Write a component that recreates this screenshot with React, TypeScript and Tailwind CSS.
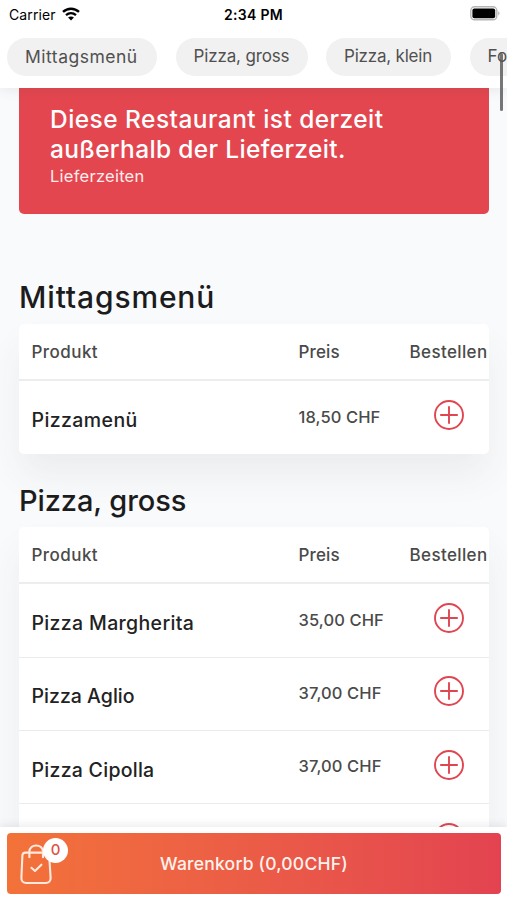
import React from 'react';

interface Product {
  name: string;
  price: string;
  className: string;
}

interface CategoryProps {
  title: string;
  titleClass: string;
  products: Product[];
}

const CHIPS = [
  {label: 'Mittagsmenü', className: 'w-[150px] text-[17.5px] tracking-[0.5px]'},
  {label: 'Pizza, gross', className: 'w-[132px] text-[17px] tracking-[-0.15px]'},
  {label: 'Pizza, klein', className: 'w-[125px] text-[17px] tracking-[-0.2px]'},
  {label: 'Focaccia', className: 'w-[112px] text-[17px] tracking-[0.2px]'},
];

const CATEGORIES: CategoryProps[] = [
  {
    title: 'Mittagsmenü',
    titleClass: 'text-[30px] tracking-[0.85px]',
    products: [
      {name: 'Pizzamenü', price: '18,50 CHF', className: 'tracking-[0.4px]'},
    ],
  },
  {
    title: 'Pizza, gross',
    titleClass: 'text-[29px] tracking-[-0.1px]',
    products: [
      {name: 'Pizza Margherita', price: '35,00 CHF', className: 'tracking-[0.34px]'},
      {name: 'Pizza Aglio', price: '37,00 CHF', className: 'tracking-[0.02px]'},
      {name: 'Pizza Cipolla', price: '37,00 CHF', className: 'tracking-[0.27px]'},
      {name: 'Pizza Funghi', price: '37,00 CHF', className: 'tracking-[0.3px]'},
    ],
  },
];

function WifiIcon() {
  return (
    <svg width="18" height="14" viewBox="0 0 18 14" fill="none">
      <path d="M1 4.9C5.6.6 12.4.6 17 4.9" stroke="#000" strokeWidth="2.4" />
      <path d="M4 8.2c2.9-2.6 7.1-2.6 10 0" stroke="#000" strokeWidth="2.3" />
      <path d="M9 13.6 6.1 10.6c1.7-1.5 4.1-1.5 5.8 0Z" fill="#000" />
    </svg>
  );
}

function BatteryIcon() {
  return (
    <svg width="31" height="15" viewBox="0 0 31 15" fill="none">
      <rect x="0.8" y="0.8" width="26" height="13" rx="3.8" stroke="#b5b5b5" strokeWidth="1.4" />
      <rect x="2.4" y="2.4" width="22.8" height="9.8" rx="2" fill="#000" />
      <path d="M28.2 5.2c1.8.7 1.8 3.5 0 4.2Z" fill="#b5b5b5" />
    </svg>
  );
}

function PlusCircle() {
  return (
    <svg width="30" height="30" viewBox="0 0 30 30" fill="none" stroke="#df4652">
      <circle cx="15" cy="15" r="14" strokeWidth="1.9" />
      <path d="M15 6.2v17.6M6.2 15h17.6" strokeWidth="1.9" />
    </svg>
  );
}

function BagIcon() {
  return (
    <svg
      width="32"
      height="41"
      viewBox="0 0 32 41"
      fill="none"
      stroke="#ffe9df"
      strokeWidth="2.1"
      strokeLinecap="round"
      strokeLinejoin="round"
    >
      <path d="M5.4 8.6h20.8c1.9 0 2.9 1 3 2.8l1.4 22.4c.2 3.3-1.7 5.2-5 5.2H6.4c-3.3 0-5.2-1.9-5-5.2l1-22.4c.1-1.8 1.1-2.8 3-2.8Z" />
      <path d="M9.4 13.3V7.6c0-8.2 13.6-8.2 13.6 0v5.7" />
      <path d="m11.4 23.8 3.6 3.2 6.4-6.3" />
    </svg>
  );
}

function StatusBar() {
  return (
    <div className="grid h-7 grid-cols-3 items-center pr-[6px] pl-[9px] text-black">
      <div className="flex items-center gap-[6px]">
        <span className="text-[14px] tracking-[0.12px]">Carrier</span>
        <WifiIcon />
      </div>
      <span className="pr-[3px] text-center text-[14px] font-semibold tracking-[0.3px]">
        2:34 PM
      </span>
      <div className="flex justify-end pb-px">
        <BatteryIcon />
      </div>
    </div>
  );
}

function Header() {
  return (
    <header className="relative z-10 h-[88px] shrink-0 bg-white shadow-[0_2px_12px_rgba(60,70,80,0.1)]">
      <StatusBar />
      <nav className="flex gap-[18.5px] overflow-hidden pt-[10px] pl-[7px]">
        {CHIPS.map((chip) => (
          <a
            key={chip.label}
            className={`flex h-[38px] shrink-0 items-center rounded-full bg-[#f1f1f1] pl-[18px] whitespace-nowrap text-[#505050] ${chip.className}`}
          >
            {chip.label}
          </a>
        ))}
      </nav>
      <div className="absolute top-[53px] right-[4px] h-[58px] w-[3.5px] rounded-full bg-[#555]/80" />
    </header>
  );
}

function Notice() {
  return (
    <div className="h-[126px] rounded-b-[5px] bg-[#e4464f] pt-[17px] pl-[31px] text-white">
      <p className="text-[24.5px] leading-[29.5px] font-medium tracking-[0.45px]">
        Diese Restaurant ist derzeit
        <br />
        <span className="tracking-[0.35px]">außerhalb der Lieferzeit.</span>
      </p>
      <p className="text-[16.5px] leading-6 tracking-[0.25px] text-[#ffeced]">
        Lieferzeiten
      </p>
    </div>
  );
}

function Category({title, titleClass, products}: CategoryProps) {
  return (
    <section>
      <h2
        className={`h-[53px] leading-[53px] font-medium text-[#1c1c1c] ${titleClass}`}
      >
        {title}
      </h2>
      <div className="rounded-[5px] bg-white shadow-[0_22px_36px_-2px_rgba(50,65,65,0.075)]">
        <div className="flex h-[57px] items-center border-b-2 border-[#ecedee] pt-[2px] pl-[12.5px] text-[17px] font-medium text-[#4a4a4a]">
          <span className="w-[267px] tracking-[0.45px]">Produkt</span>
          <span className="w-[111px] tracking-[0.15px]">Preis</span>
          <span className="tracking-[0.37px]">Bestellen</span>
        </div>
        {products.map((product) => (
          <div
            key={product.name}
            className="flex h-[73.3px] items-center border-b-[1.5px] border-[#e9ebec] pl-[12.5px] last:border-b-0"
          >
            <span
              className={`w-[267px] pt-[6.5px] text-[19.5px] font-medium text-[#222] ${product.className}`}
            >
              {product.name}
            </span>
            <span className="w-[135px] pb-px text-[16.5px] font-medium tracking-[0.1px] text-[#4a4a4a]">
              {product.price}
            </span>
            <span className="pb-[5px]">
              <PlusCircle />
            </span>
          </div>
        ))}
      </div>
    </section>
  );
}

function CartBar() {
  return (
    <footer className="relative z-10 h-[73px] shrink-0 bg-white px-[7px] pt-[6px] pb-[6px] shadow-[0_-2px_8px_rgba(60,70,80,0.1)]">
      <button className="relative flex h-[61px] w-[494px] items-center justify-center rounded-[4px] bg-linear-to-r from-[#f37239] to-[#e34350] pt-[2px] text-[17.5px] font-medium tracking-[0.22px] text-[#fff2ed]">
        <span className="absolute top-[11px] left-[13px]">
          <BagIcon />
        </span>
        <span className="absolute top-[5px] left-9 flex h-[25px] w-[25px] items-center justify-center rounded-full bg-white text-[15px] tracking-normal text-[#df5144]">
          0
        </span>
        Warenkorb (0,00CHF)
      </button>
    </footer>
  );
}

export default function App() {
  return (
    <div className="flex h-[900px] w-[507px] flex-col overflow-hidden bg-[#f9fafc] font-['Inter',sans-serif]">
      <Header />
      <main className="min-h-0 flex-1 overflow-hidden pr-[18px] pl-[19px]">
        <Notice />
        <div className="flex flex-col gap-5 pt-[57px]">
          {CATEGORIES.map((category) => (
            <Category key={category.title} {...category} />
          ))}
        </div>
      </main>
      <CartBar />
    </div>
  );
}
